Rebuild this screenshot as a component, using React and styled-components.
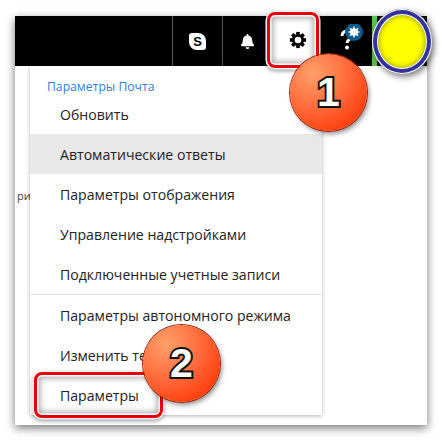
import React from 'react';
import styled, { createGlobalStyle } from 'styled-components';
import { FaBell } from 'react-icons/fa';

const menuTop = [
    'Обновить',
    'Автоматические ответы',
    'Параметры отображения',
    'Управление надстройками',
    'Подключенные учетные записи',
];

const teeth = [0, 45, 90, 135, 180, 225, 270, 315];

const App = () => {
    return (
        <>
            <GlobalStyle />
            <Frame>
                <TopBar>
                    <BarCell>
                        <SkypeIcon><span>S</span></SkypeIcon>
                    </BarCell>
                    <BarCell>
                        <FaBell size={15} color="#fff" />
                    </BarCell>
                    <BarGap />
                    <HelpCell>
                        <svg width="28" height="34" viewBox="0 0 28 34">
                            <path d="M3 12c0-3 2-5 5-5s5 2 5 5c0 3-5 3-5 7" fill="none" stroke="#fff" strokeWidth="3" />
                            <circle cx="8" cy="23.500" r="2" fill="#fff" />
                            <circle cx="15" cy="8" r="9" fill="#0f5a8c" />
                            <path d="M15 2l1.500 3 3-1.200-1 3.200 3 1-3 1 1 3.200-3-1.200-1.500 3-1.500-3-3 1.200 1-3.200-3-1 3-1-1-3.200 3 1.200z" fill="#fff" />
                        </svg>
                    </HelpCell>
                    <GreenStrip />
                </TopBar>
                <Body>
                    <SideText>ри</SideText>
                    <Menu>
                        <MenuTitle>Параметры Почта</MenuTitle>
                        <MenuGroup>
                            {menuTop.map((text, i) => (
                                <MenuItem key={text} $active={i === 1}>{text}</MenuItem>
                            ))}
                        </MenuGroup>
                        <MenuGroup $divided>
                            <MenuItem>Параметры автономного режима</MenuItem>
                            <MenuItem>Изменить тему</MenuItem>
                            <MenuItem>Параметры</MenuItem>
                        </MenuGroup>
                    </Menu>
                </Body>
            </Frame>
            <GearHighlight>
                <svg width="18" height="18" viewBox="0 0 20 20">
                    {teeth.map((deg) => (
                        <rect key={deg} x="8" y="1" width="4" height="4" fill="#000" transform={`rotate(${deg} 10 10)`} />
                    ))}
                    <circle cx="10" cy="10" r="5.200" fill="none" stroke="#000" strokeWidth="3" />
                </svg>
            </GearHighlight>
            <ItemHighlight />
            <Badge $x={290} $y={54}>1</Badge>
            <Badge $x={143} $y={325}>2</Badge>
            <Avatar />
        </>
    );
};

export default App;

const GlobalStyle = createGlobalStyle`
    html, body {
        margin: 0;
        background: #fff;
        overflow: hidden;
    }
    body {
        width: 442px;
        height: 440px;
        position: relative;
        font-family: "Open Sans", "Noto Sans", sans-serif;
    }
`

const Frame = styled.div`
    width: 412px;
    height: 409px;
    margin: 16px 0 0 15px;
    position: absolute;
    background: #fff;
    box-shadow: 0 3px 9px rgba(0, 0, 0, 0.55);
    display: flex;
    flex-direction: column;
`

const TopBar = styled.div`
    height: 50px;
    flex-shrink: 0;
    background: #000;
    display: flex;
    justify-content: flex-end;
`

const BarCell = styled.div`
    width: 50px;
    border-left: 1px solid #555;
    box-sizing: border-box;
    display: flex;
    align-items: center;
    justify-content: center;
`

const BarGap = styled.div`
    width: 50px;
`

const HelpCell = styled.div`
    width: 50px;
    padding-left: 17px;
    box-sizing: border-box;
    display: flex;
    align-items: center;
`

const GreenStrip = styled.div`
    width: 55px;
    border-left: 5px solid #5cc24e;
    box-sizing: border-box;
`

const SkypeIcon = styled.div`
    width: 17px;
    height: 17px;
    border-radius: 3px 8px 3px 8px;
    background: #fff;
    color: #000;
    display: flex;
    align-items: center;
    justify-content: center;
    font: 700 13px "Liberation Sans", sans-serif;
`

const Body = styled.div`
    flex: 1;
    display: flex;
    min-height: 0;
`

const SideText = styled.div`
    width: 15px;
    padding: 122px 0 0 2px;
    box-sizing: border-box;
    overflow: hidden;
    font-size: 11px;
    color: #444;
`

const Menu = styled.div`
    width: 292px;
    height: 349px;
    background: #fff;
    box-shadow: 0 1px 4px rgba(0, 0, 0, 0.3);
`

const MenuTitle = styled.div`
    height: 28px;
    padding: 13px 0 0 17px;
    box-sizing: border-box;
    font-size: 12.200px;
    line-height: 16px;
    color: #2f7fdc;
`

const MenuGroup = styled.div`
    border-top: ${(props) => (props.$divided ? '1px solid #e4e4e4' : 'none')};
`

const MenuItem = styled.div`
    height: 40px;
    padding-left: 30px;
    display: flex;
    align-items: center;
    font-size: 14.100px;
    color: #222;
    background: ${(props) => (props.$active ? '#e8e8e8' : 'transparent')};
`

const GearHighlight = styled.div`
    position: absolute;
    left: 267px;
    top: 12px;
    width: 52px;
    height: 56px;
    box-sizing: border-box;
    background: #fff;
    border: 3px solid #e8000c;
    border-radius: 8px;
    box-shadow: 0 0 0 1.500px #f4f4f4, 0 2px 4px 1px rgba(0, 0, 0, 0.4), inset 0 0 0 1.500px #fff, inset 0 0 6px 3px rgba(0, 0, 0, 0.35);
    display: flex;
    align-items: center;
    justify-content: center;
    padding-left: 10px;
`

const ItemHighlight = styled.div`
    position: absolute;
    left: 34px;
    top: 372px;
    width: 129px;
    height: 46px;
    box-sizing: border-box;
    border: 3px solid #e8000c;
    border-radius: 8px;
    box-shadow: 0 0 0 1.500px #f4f4f4, 0 2px 4px 1px rgba(0, 0, 0, 0.4), inset 0 0 0 1.500px #fff, inset 0 0 6px 3px rgba(0, 0, 0, 0.35);
`

const Badge = styled.div`
    position: absolute;
    left: ${(props) => props.$x}px;
    top: ${(props) => props.$y}px;
    width: 77px;
    height: 77px;
    border-radius: 50%;
    background: radial-gradient(circle at 30% 25%, #ffa06a 0%, #ff7040 40%, #ff4414 75%, #e83000 100%);
    box-shadow: 0 0 0 1px #a01e00, 2px 3px 5px rgba(0, 0, 0, 0.45);
    display: flex;
    align-items: center;
    justify-content: center;
    font: 700 41px "Liberation Sans", sans-serif;
    color: #fff;
    -webkit-text-stroke: 4px #111;
    paint-order: stroke fill;
`

const Avatar = styled.div`
    position: absolute;
    left: 372px;
    top: 9px;
    width: 60px;
    height: 65px;
    border-radius: 50%;
    background: #ffff00;
    box-shadow:
        inset 0 0 0 1px #fff,
        inset 0 0 0 5px #333399,
        inset 0 0 0 6px #fff,
        inset 0 0 5px 7px #a6a600,
        2px 3px 6px rgba(0, 0, 0, 0.5);
`
